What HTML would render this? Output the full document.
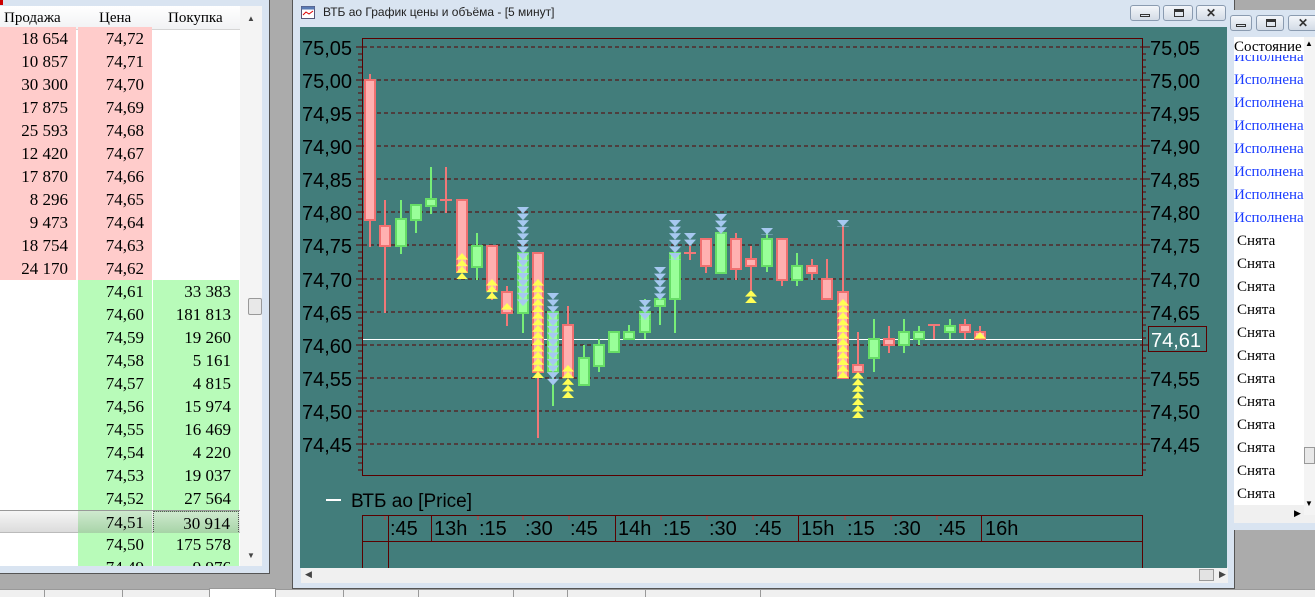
<!DOCTYPE html>
<html><head><meta charset="utf-8"><style>
*{margin:0;padding:0;box-sizing:border-box}
body{width:1315px;height:597px;overflow:hidden;background:#ababab;position:relative;font-family:"Liberation Serif","DejaVu Serif",serif;}
.abs{position:absolute}
.ob{left:0;top:0;width:270px;height:574px;background:#d9e4f1;border-right:1px solid #555;border-bottom:1px solid #555}
.obin{left:0;top:6px;width:262px;height:560px;background:#fff;overflow:hidden}
.hdr{top:0;height:24px;width:240px;background:linear-gradient(#fff,#f1f2f4);border-bottom:1px solid #d5d5d5;font-size:15px;line-height:24px}
.row{position:absolute;height:23px;width:240px;font-size:17px;line-height:23px}
.c{position:absolute;top:0;height:23px;text-align:right}
.c1{left:0;width:76px;padding-right:8px}
.c2{left:78px;width:74px;padding-right:8px}
.c3{left:153px;width:86px;padding-right:8px}
.pk{background:#ffcccb}.gr{background:#b8fbb9}
.sb{left:240px;top:0;width:22px;height:560px;background:#f4f4f4}
.rp{left:1234px;top:10px;width:81px;height:520px;background:#d9e4f1}
.rin{left:0;top:27px;width:81px;height:478px;background:#fff;overflow:hidden;font-size:15px}
.btn{position:absolute;height:16px;border:1px solid #8a9bb0;border-radius:3px;background:linear-gradient(#f3f6fa,#d3dbe6)}
</style></head><body>

<div class="abs ob">
 <div class="abs" style="left:0;top:0;width:262px;height:6px;background:#d9e4f1"></div>
 <div class="abs" style="left:0;top:0;width:3px;height:5px;background:#c00"></div>
 <div class="abs obin">
  <div class="abs hdr"><span class="abs" style="left:4px">Продажа</span><span class="abs" style="left:99px">Цена</span><span class="abs" style="left:168px">Покупка</span></div>
  <div class="abs" style="left:0;top:21px;width:240px;height:540px">
   <div class="row" style="top:0"><div class="c c1 pk">18 654</div><div class="c c2 pk">74,72</div></div>
   <div class="row" style="top:23px"><div class="c c1 pk">10 857</div><div class="c c2 pk">74,71</div></div>
   <div class="row" style="top:46px"><div class="c c1 pk">30 300</div><div class="c c2 pk">74,70</div></div>
   <div class="row" style="top:69px"><div class="c c1 pk">17 875</div><div class="c c2 pk">74,69</div></div>
   <div class="row" style="top:92px"><div class="c c1 pk">25 593</div><div class="c c2 pk">74,68</div></div>
   <div class="row" style="top:115px"><div class="c c1 pk">12 420</div><div class="c c2 pk">74,67</div></div>
   <div class="row" style="top:138px"><div class="c c1 pk">17 870</div><div class="c c2 pk">74,66</div></div>
   <div class="row" style="top:161px"><div class="c c1 pk">8 296</div><div class="c c2 pk">74,65</div></div>
   <div class="row" style="top:184px"><div class="c c1 pk">9 473</div><div class="c c2 pk">74,64</div></div>
   <div class="row" style="top:207px"><div class="c c1 pk">18 754</div><div class="c c2 pk">74,63</div></div>
   <div class="row" style="top:230px"><div class="c c1 pk">24 170</div><div class="c c2 pk">74,62</div></div>
   <div class="row" style="top:253px"><div class="c c2 gr">74,61</div><div class="c c3 gr">33 383</div></div>
   <div class="row" style="top:276px"><div class="c c2 gr">74,60</div><div class="c c3 gr">181 813</div></div>
   <div class="row" style="top:299px"><div class="c c2 gr">74,59</div><div class="c c3 gr">19 260</div></div>
   <div class="row" style="top:322px"><div class="c c2 gr">74,58</div><div class="c c3 gr">5 161</div></div>
   <div class="row" style="top:345px"><div class="c c2 gr">74,57</div><div class="c c3 gr">4 815</div></div>
   <div class="row" style="top:368px"><div class="c c2 gr">74,56</div><div class="c c3 gr">15 974</div></div>
   <div class="row" style="top:391px"><div class="c c2 gr">74,55</div><div class="c c3 gr">16 469</div></div>
   <div class="row" style="top:414px"><div class="c c2 gr">74,54</div><div class="c c3 gr">4 220</div></div>
   <div class="row" style="top:437px"><div class="c c2 gr">74,53</div><div class="c c3 gr">19 037</div></div>
   <div class="row" style="top:460px"><div class="c c2 gr">74,52</div><div class="c c3 gr">27 564</div></div>
   <div class="row" style="top:483px;background:linear-gradient(#f6f6f6,#dcdcdc);border-top:1px solid #999;border-bottom:1px solid #bbb"><div class="c c2" style="background:linear-gradient(#cfeacf,#a6d3a6)">74,51</div><div class="c c3" style="background:linear-gradient(#cfeacf,#a6d3a6);border:1px dotted #555">30 914</div></div>
   <div class="row" style="top:506px"><div class="c c2 gr">74,50</div><div class="c c3 gr">175 578</div></div>
   <div class="row" style="top:529px"><div class="c c2 gr">74,49</div><div class="c c3 gr">9 976</div></div>
  </div>
  <div class="abs sb"><div class="abs" style="left:7px;top:8px;font-size:8px;color:#444">▲</div>
   <div class="abs" style="left:8px;top:292px;width:14px;height:17px;border:1px solid #999;background:#e8e8e8;border-radius:2px"></div>
   <div class="abs" style="left:7px;top:545px;font-size:8px;color:#444">▼</div></div>
 </div>
</div>

<div class="abs" style="left:292px;top:0;width:943px;height:589px;background:#d9e4f1;border:1px solid #555;border-top:none">
 <svg class="abs" style="left:8px;top:6px" width="14" height="13"><rect x=".5" y=".5" width="13" height="12" fill="#fff" stroke="#557"/><rect x=".5" y=".5" width="13" height="3" fill="#5a7bb5"/><polyline points="2,9 5,6 8,8 12,5" fill="none" stroke="#d00"/></svg>
 <div class="abs" style="left:30px;top:5px;font:12px 'Liberation Sans',sans-serif;color:#222">ВТБ ао График цены и объёма - [5 минут]</div>
 <div class="btn" style="left:837px;top:5px;width:30px"><div class="abs" style="left:9px;top:8px;width:10px;height:3px;border:1px solid #333"></div></div>
 <div class="btn" style="left:870px;top:5px;width:30px"><div class="abs" style="left:10px;top:3px;width:10px;height:8px;border:1px solid #333;border-top:3px solid #333"></div></div>
 <div class="btn" style="left:903px;top:5px;width:30px;font:bold 12px 'Liberation Sans',sans-serif;text-align:center;line-height:14px;color:#333">✕</div>
 <div class="abs" style="left:8px;top:567px;width:927px;height:16px;background:#f0f0f0"><div class="abs" style="left:4px;top:2px;font-size:9px;color:#444">◀</div><div class="abs" style="left:898px;top:2px;width:15px;height:12px;border:1px solid #999;background:#e3e3e3"></div><div class="abs" style="left:918px;top:2px;font-size:9px;color:#444">▶</div></div>
</div>

<svg class="abs" style="left:300px;top:27px" width="927" height="541" viewBox="300 27 927 541" font-family="Liberation Sans, sans-serif">
<defs>
<pattern id="up" width="12" height="6.6" patternUnits="userSpaceOnUse"><polygon points="0,6.6 6,0 12,6.6" fill="#ffff55"/></pattern>
<pattern id="dn" width="12" height="6.6" patternUnits="userSpaceOnUse"><polygon points="0,0 12,0 6,6.6" fill="#a6c8f0"/></pattern>
</defs>
<rect x="300" y="27" width="927" height="541" fill="#427d7b"/>
<g stroke="#5a0000" stroke-dasharray="4,3" stroke-width="1">
<line x1="363" x2="1142" y1="47" y2="47"/><line x1="363" x2="1142" y1="80" y2="80"/><line x1="363" x2="1142" y1="113" y2="113"/><line x1="363" x2="1142" y1="146" y2="146"/><line x1="363" x2="1142" y1="179" y2="179"/><line x1="363" x2="1142" y1="212" y2="212"/><line x1="363" x2="1142" y1="245" y2="245"/><line x1="363" x2="1142" y1="279" y2="279"/><line x1="363" x2="1142" y1="312" y2="312"/><line x1="363" x2="1142" y1="345" y2="345"/><line x1="363" x2="1142" y1="378" y2="378"/><line x1="363" x2="1142" y1="411" y2="411"/><line x1="363" x2="1142" y1="444" y2="444"/>
</g>
<rect x="362.5" y="38.5" width="780" height="437" fill="none" stroke="#5a0000"/>
<g stroke="#5a0000">
<path d="M1142 47h8M1142 80h8M1142 113h8M1142 146h8M1142 179h8M1142 212h8M1142 245h8M1142 279h8M1142 312h8M1142 345h8M1142 378h8M1142 411h8M1142 444h8M356 47h6M356 80h6M356 113h6M356 146h6M356 179h6M356 212h6M356 245h6M356 279h6M356 312h6M356 345h6M356 378h6M356 411h6M356 444h6"/>
<path d="M1142 54h4M1142 60h4M1142 67h4M1142 73h4M1142 87h4M1142 93h4M1142 100h4M1142 106h4M1142 120h4M1142 126h4M1142 133h4M1142 139h4M1142 153h4M1142 159h4M1142 166h4M1142 172h4M1142 186h4M1142 192h4M1142 199h4M1142 205h4M1142 219h4M1142 225h4M1142 232h4M1142 238h4M1142 252h4M1142 258h4M1142 265h4M1142 271h4M1142 285h4M1142 292h4M1142 298h4M1142 305h4M1142 318h4M1142 325h4M1142 331h4M1142 338h4M1142 351h4M1142 358h4M1142 364h4M1142 371h4M1142 384h4M1142 391h4M1142 397h4M1142 404h4M1142 417h4M1142 424h4M1142 430h4M1142 437h4M1142 450h4M1142 457h4M1142 463h4M1142 470h4"/>
<path d="M358 54h4M358 60h4M358 67h4M358 73h4M358 87h4M358 93h4M358 100h4M358 106h4M358 120h4M358 126h4M358 133h4M358 139h4M358 153h4M358 159h4M358 166h4M358 172h4M358 186h4M358 192h4M358 199h4M358 205h4M358 219h4M358 225h4M358 232h4M358 238h4M358 252h4M358 258h4M358 265h4M358 271h4M358 285h4M358 292h4M358 298h4M358 305h4M358 318h4M358 325h4M358 331h4M358 338h4M358 351h4M358 358h4M358 364h4M358 371h4M358 384h4M358 391h4M358 397h4M358 404h4M358 417h4M358 424h4M358 430h4M358 437h4M358 450h4M358 457h4M358 463h4M358 470h4"/>
</g>
<g font-size="20" fill="#000">
<text x="302" y="55">75,05</text><text x="302" y="88">75,00</text><text x="302" y="121">74,95</text><text x="302" y="154">74,90</text><text x="302" y="187">74,85</text><text x="302" y="220">74,80</text><text x="302" y="253">74,75</text><text x="302" y="287">74,70</text><text x="302" y="320">74,65</text><text x="302" y="353">74,60</text><text x="302" y="386">74,55</text><text x="302" y="419">74,50</text><text x="302" y="452">74,45</text>
<text x="1150" y="55">75,05</text><text x="1150" y="88">75,00</text><text x="1150" y="121">74,95</text><text x="1150" y="154">74,90</text><text x="1150" y="187">74,85</text><text x="1150" y="220">74,80</text><text x="1150" y="253">74,75</text><text x="1150" y="287">74,70</text><text x="1150" y="320">74,65</text><text x="1150" y="386">74,55</text><text x="1150" y="419">74,50</text><text x="1150" y="452">74,45</text>
</g>
<line x1="363" x2="1142" y1="339.5" y2="339.5" stroke="#fff"/>
<rect x="1148.5" y="326.5" width="58" height="25" fill="#427d7b" stroke="#5a0000"/>
<text x="1151" y="347" font-size="20" fill="#fff">74,61</text>

<g stroke-width="2">
<g stroke="#f07878">
<path d="M370 74V247M385 200V313M446 167V213M462 200V272M492 246V300M507 286V326M538 253V438M568 306V377M690 246V260M706 239V273M736 233V280M751 246V290M782 239V286M812 259V280M827 259V299M843 224V378M858 332V372M889 326V353M934 325V339M965 319V339M980 326V339"/>
</g>
<g stroke="#77ee77">
<path d="M401 200V254M416 205V233M431 167V214M477 233V280M523 253V333M553 312V406M584 345V385M599 339V372M614 332V352M629 325V339M645 299V339M660 299V325M675 253V333M721 233V273M767 230V272M797 253V286M874 319V372M904 319V353M919 326V345M950 319V339"/>
</g>
</g>
<g fill="#ffb0b0" stroke="#f07070" stroke-width="2">
<rect x="365" y="80" width="10" height="140"/><rect x="380" y="226" width="10" height="20"/><rect x="457" y="200" width="10" height="72"/><rect x="487" y="246" width="10" height="44"/><rect x="502" y="292" width="10" height="21"/><rect x="533" y="253" width="10" height="119"/><rect x="563" y="325" width="10" height="52"/><rect x="701" y="239" width="10" height="27"/><rect x="731" y="239" width="10" height="30"/><rect x="746" y="259" width="10" height="7"/><rect x="777" y="239" width="10" height="41"/><rect x="807" y="266" width="10" height="7"/><rect x="822" y="279" width="10" height="20"/><rect x="838" y="292" width="10" height="86"/><rect x="853" y="365" width="10" height="7"/><rect x="884" y="339" width="10" height="6"/><rect x="960" y="325" width="10" height="7"/><rect x="975" y="332" width="10" height="7"/>
</g>
<g stroke="#f07878" stroke-width="2"><path d="M440 200h12M684 253h12M928 325h12"/></g>
<g fill="#99ff99" stroke="#66dd66" stroke-width="2">
<rect x="396" y="219" width="10" height="27"/><rect x="411" y="205" width="10" height="15"/><rect x="426" y="199" width="10" height="7"/><rect x="472" y="246" width="10" height="21"/><rect x="518" y="253" width="10" height="60"/><rect x="548" y="312" width="10" height="60"/><rect x="579" y="358" width="10" height="27"/><rect x="594" y="345" width="10" height="21"/><rect x="609" y="332" width="10" height="20"/><rect x="624" y="332" width="10" height="7"/><rect x="640" y="312" width="10" height="20"/><rect x="655" y="299" width="10" height="7"/><rect x="670" y="253" width="10" height="46"/><rect x="716" y="233" width="10" height="40"/><rect x="762" y="239" width="10" height="27"/><rect x="792" y="266" width="10" height="14"/><rect x="869" y="339" width="10" height="19"/><rect x="899" y="332" width="10" height="13"/><rect x="914" y="332" width="10" height="7"/><rect x="945" y="326" width="10" height="6"/>
</g>
<g transform="translate(517,207)"><rect width="12" height="99" fill="url(#dn)"/></g>
<g transform="translate(547,293)"><rect width="12" height="92" fill="url(#dn)"/></g>
<g transform="translate(639,300)"><rect width="12" height="20" fill="url(#dn)"/></g>
<g transform="translate(654,267)"><rect width="12" height="33" fill="url(#dn)"/></g>
<g transform="translate(669,220)"><rect width="12" height="40" fill="url(#dn)"/></g>
<g transform="translate(684,233)"><rect width="12" height="13" fill="url(#dn)"/></g>
<g transform="translate(715,214)"><rect width="12" height="20" fill="url(#dn)"/></g>
<g transform="translate(761,228)"><rect width="12" height="7" fill="url(#dn)"/></g>
<g transform="translate(837,220)"><rect width="12" height="7" fill="url(#dn)"/></g>
<g transform="translate(456,253)"><rect width="12" height="26" fill="url(#up)"/></g>
<g transform="translate(486,279)"><rect width="12" height="20" fill="url(#up)"/></g>
<g transform="translate(501,303)"><rect width="12" height="7" fill="url(#up)"/></g>
<g transform="translate(532,279)"><rect width="12" height="99" fill="url(#up)"/></g>
<g transform="translate(562,365)"><rect width="12" height="33" fill="url(#up)"/></g>
<g transform="translate(745,290)"><rect width="12" height="13" fill="url(#up)"/></g>
<g transform="translate(837,299)"><rect width="12" height="79" fill="url(#up)"/></g>
<g transform="translate(852,372)"><rect width="12" height="46" fill="url(#up)"/></g>
<g transform="translate(974,332)"><rect width="12" height="7" fill="url(#up)"/></g>

<line x1="326" x2="341" y1="500" y2="500" stroke="#fff" stroke-width="2"/>
<text x="351" y="507" font-size="19" fill="#000">ВТБ ао [Price]</text>
<rect x="362.5" y="515.5" width="780" height="60" fill="none" stroke="#5a0000"/>
<line x1="362" x2="1142" y1="541.5" y2="541.5" stroke="#5a0000"/>
<g stroke="#5a0000"><path d="M388.5 515v53M431.5 515v26M615.5 515v26M798.5 515v26M981.5 515v26"/></g>
<g stroke="#c04040"><path d="M385 516v4M478 516v4M523 516v4M569 516v4M661 516v4M707 516v4M753 516v4M845 516v4M891 516v4M937 516v4"/></g>
<g font-size="20" fill="#000">
<text x="390" y="535">:45</text><text x="434" y="535">13h</text><text x="479" y="535">:15</text><text x="525" y="535">:30</text><text x="570" y="535">:45</text><text x="618" y="535">14h</text><text x="663" y="535">:15</text><text x="709" y="535">:30</text><text x="754" y="535">:45</text><text x="801" y="535">15h</text><text x="847" y="535">:15</text><text x="893" y="535">:30</text><text x="938" y="535">:45</text><text x="985" y="535">16h</text>
</g>
</svg>

<div class="abs rp">
 <div class="btn" style="left:-4px;top:5px;width:22px"><div class="abs" style="left:5px;top:8px;width:10px;height:3px;border:1px solid #333"></div></div>
 <div class="btn" style="left:22px;top:5px;width:28px"><div class="abs" style="left:9px;top:3px;width:10px;height:8px;border:1px solid #333;border-top:3px solid #333"></div></div>
 <div class="btn" style="left:54px;top:5px;width:30px;font:bold 12px 'Liberation Sans',sans-serif;text-align:center;line-height:14px;color:#333">✕</div>
 <div class="abs rin">
  <div class="abs" style="left:0;top:0;width:70px;height:18px;background:#fff;font-size:15px;line-height:20px;z-index:2;overflow:hidden">Состояние</div>
  <div class="abs" style="left:70px;top:0;width:11px;height:478px;background:#f4f4f4;z-index:3"><div class="abs" style="left:1px;top:2px;font-size:8px">▲</div><div class="abs" style="left:0;top:410px;width:11px;height:17px;border:1px solid #999;background:#e8e8e8"></div><div class="abs" style="left:1px;top:462px;font-size:8px">▼</div></div>
  <div style="color:#1a3cff;line-height:23px;position:absolute;left:0;top:-14px">Исполнена<br>Исполнена<br>Исполнена<br>Исполнена<br>Исполнена<br>Исполнена<br>Исполнена<br>Исполнена<br>Исполнена</div>
  <div style="line-height:23px;position:absolute;left:3px;top:193px">Снята<br>Снята<br>Снята<br>Снята<br>Снята<br>Снята<br>Снята<br>Снята<br>Снята<br>Снята<br>Снята<br>Снята</div>
 </div>
 <div class="abs" style="left:0;top:495px;width:81px;height:18px;background:#f0f0f0"><div class="abs" style="left:60px;top:3px;font-size:9px">▶</div></div>
</div>

<div class="abs" style="left:0;top:589px;width:1315px;height:8px;background:#f0f0f0;border-top:1px solid #999"></div>
<div class="abs" style="left:209px;top:588px;width:67px;height:9px;background:#fff;border:1px solid #999;border-bottom:none"></div>
<div class="abs" style="left:44px;top:590px;width:1px;height:7px;background:#999"></div>
<div class="abs" style="left:122px;top:590px;width:1px;height:7px;background:#999"></div>
<div class="abs" style="left:343px;top:590px;width:1px;height:7px;background:#999"></div>
<div class="abs" style="left:418px;top:590px;width:1px;height:7px;background:#999"></div>
<div class="abs" style="left:513px;top:590px;width:1px;height:7px;background:#999"></div>
<div class="abs" style="left:567px;top:590px;width:1px;height:7px;background:#999"></div>
<div class="abs" style="left:645px;top:590px;width:1px;height:7px;background:#999"></div>
<div class="abs" style="left:760px;top:590px;width:1px;height:7px;background:#999"></div>
</body></html>
